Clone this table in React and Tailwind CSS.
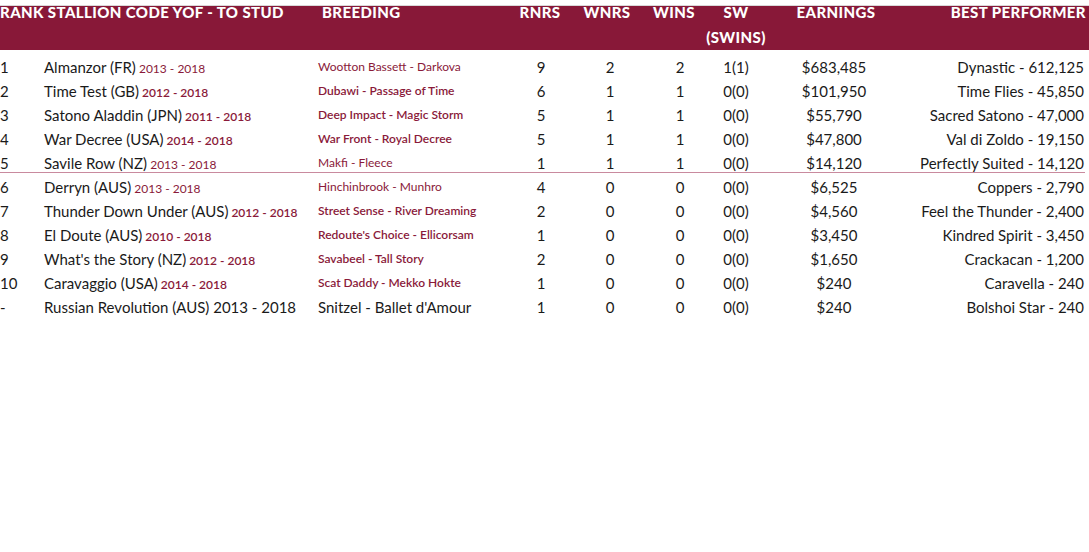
import React from "react";

const rows = [
  { r: "1", name: "Almanzor (FR)", yrs: "2013 - 2018", light: true, br: "Wootton Bassett - Darkova", rn: "9", wn: "2", w: "2", sw: "1(1)", e: "$683,485", best: "Dynastic - 612,125" },
  { r: "2", name: "Time Test (GB)", yrs: "2012 - 2018", br: "Dubawi - Passage of Time", rn: "6", wn: "1", w: "1", sw: "0(0)", e: "$101,950", best: "Time Flies - 45,850" },
  { r: "3", name: "Satono Aladdin (JPN)", yrs: "2011 - 2018", br: "Deep Impact - Magic Storm", rn: "5", wn: "1", w: "1", sw: "0(0)", e: "$55,790", best: "Sacred Satono - 47,000" },
  { r: "4", name: "War Decree (USA)", yrs: "2014 - 2018", br: "War Front - Royal Decree", rn: "5", wn: "1", w: "1", sw: "0(0)", e: "$47,800", best: "Val di Zoldo - 19,150" },
  { r: "5", name: "Savile Row (NZ)", yrs: "2013 - 2018", light: true, br: "Makfi - Fleece", rn: "1", wn: "1", w: "1", sw: "0(0)", e: "$14,120", best: "Perfectly Suited - 14,120", sep: true },
  { r: "6", name: "Derryn (AUS)", yrs: "2013 - 2018", light: true, br: "Hinchinbrook - Munhro", rn: "4", wn: "0", w: "0", sw: "0(0)", e: "$6,525", best: "Coppers - 2,790" },
  { r: "7", name: "Thunder Down Under (AUS)", yrs: "2012 - 2018", br: "Street Sense - River Dreaming", rn: "2", wn: "0", w: "0", sw: "0(0)", e: "$4,560", best: "Feel the Thunder - 2,400" },
  { r: "8", name: "El Doute (AUS)", yrs: "2010 - 2018", br: "Redoute's Choice - Ellicorsam", rn: "1", wn: "0", w: "0", sw: "0(0)", e: "$3,450", best: "Kindred Spirit - 3,450" },
  { r: "9", name: "What's the Story (NZ)", yrs: "2012 - 2018", br: "Savabeel - Tall Story", rn: "2", wn: "0", w: "0", sw: "0(0)", e: "$1,650", best: "Crackacan - 1,200" },
  { r: "10", name: "Caravaggio (USA)", yrs: "2014 - 2018", br: "Scat Daddy - Mekko Hokte", rn: "1", wn: "0", w: "0", sw: "0(0)", e: "$240", best: "Caravella - 240" },
  { r: "-", name: "Russian Revolution (AUS) 2013 - 2018", plain: true, br: "Snitzel - Ballet d'Amour", rn: "1", wn: "0", w: "0", sw: "0(0)", e: "$240", best: "Bolshoi Star - 240" },
];

export default function App() {
  return (
    <div className="w-[1089px] h-[552px] bg-white pt-[5px] text-[#1a1a1a] overflow-hidden" style={{ fontFamily: "Lato, 'Liberation Sans', sans-serif" }}>
      <div className="border-t border-[#d9d9d9] bg-[#881838] h-[45px] text-white font-black text-[15px] uppercase grid grid-cols-[320px_198px_44px_90px_44px_80px_120px_190px] leading-[25px] tracking-[0.4px]">
        <div className="-mt-[6px] whitespace-nowrap">Rank Stallion Code YOF - To Stud</div>
        <div className="-mt-[6px] pl-[2px]">Breeding</div>
        <div className="-mt-[6px] text-center">RNRS</div>
        <div className="-mt-[6px] text-center">WNRS</div>
        <div className="-mt-[6px] text-center">WINS</div>
        <div className="-mt-[6px] text-center">SW<br />(SWINS)</div>
        <div className="-mt-[6px] text-center">Earnings</div>
        <div className="-mt-[6px] text-right whitespace-nowrap">Best Performer</div>
      </div>
      <div className="pt-[5px]">
        {rows.map((row) => (
          <React.Fragment key={row.r}>
            <div className="grid grid-cols-[44px_274px_198px_50px_88px_52px_60px_136px_182px] h-[24px] items-center text-[15px]">
              <div>{row.r}</div>
              <div className="whitespace-nowrap">
                {row.name}
                {!row.plain && (
                  <span className={`text-[12px] text-[#8a1a3a] ${row.light ? "font-normal" : "font-semibold"}`}> {row.yrs}</span>
                )}
              </div>
              <div className={row.plain ? "whitespace-nowrap" : `whitespace-nowrap text-[12px] text-[#8a1a3a] ${row.light ? "font-normal" : "font-semibold"}`}>{row.br}</div>
              <div className="text-center">{row.rn}</div>
              <div className="text-center">{row.wn}</div>
              <div className="text-center">{row.w}</div>
              <div className="text-center">{row.sw}</div>
              <div className="text-center">{row.e}</div>
              <div className="text-right whitespace-nowrap">{row.best}</div>
            </div>
            {row.sep && <div className="w-[1085px] h-px bg-[#c98a9e] -mt-[3px] mb-[2px]" />}
          </React.Fragment>
        ))}
      </div>
    </div>
  );
}
